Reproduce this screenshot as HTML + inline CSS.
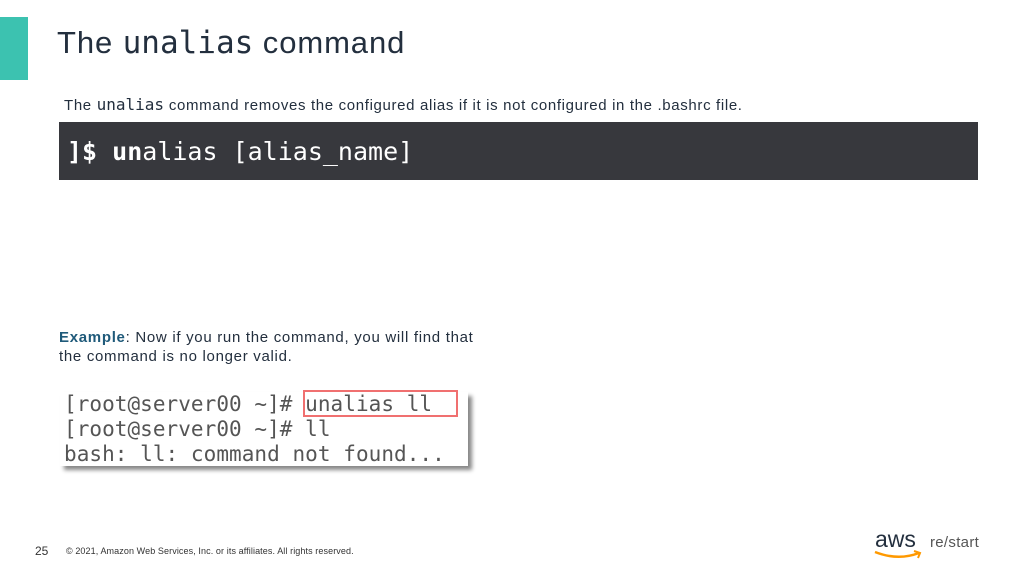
<!DOCTYPE html>
<html><head><style>
body{margin:0;width:1031px;height:578px;background:#fff;position:relative;overflow:hidden;font-family:"Liberation Sans",sans-serif;color:#232f3e}
.a{position:absolute}
.mono{font-family:"DejaVu Sans Mono","Liberation Mono",monospace}
</style></head><body>
<div class="a" style="left:0;top:17px;width:28px;height:63px;background:#3cc2b0"></div>
<div class="a" style="left:57px;top:25px;font-size:31px;letter-spacing:0.9px;color:#232f3e;white-space:nowrap">The <span class="mono" style="font-size:31px;letter-spacing:0">unalias</span> command</div>
<div class="a" style="left:64px;top:95px;font-size:15px;letter-spacing:0.65px;white-space:nowrap">The <span class="mono" style="font-size:16px;letter-spacing:0">unalias</span> command removes the configured alias if it is not configured in the .bashrc file.</div>
<div class="a" style="left:59px;top:122px;width:919px;height:58px;background:#37383d"></div>
<div class="a mono" style="left:67px;top:137px;font-size:25px;color:#fff;white-space:nowrap"><b>]$ un</b>alias [alias_name]</div>
<div class="a" style="left:59px;top:328px;font-size:15px;letter-spacing:0.7px;line-height:19px;color:#232f3e"><b style="color:#1f5a7a">Example</b>: Now if you run the command, you will find that<br>the command is no longer valid.</div>
<div class="a" style="left:60px;top:392px;width:408px;height:74px;background:#fff;box-shadow:4px 4px 4px #888"></div>
<div class="a mono" style="left:64px;top:392px;font-size:21px;letter-spacing:0.05px;line-height:25px;color:#555;white-space:pre">[root@server00 ~]# unalias ll
[root@server00 ~]# ll
bash: ll: command not found...</div>
<div class="a" style="left:303px;top:390px;width:151px;height:23px;border:2px solid #f07070"></div>
<div class="a" style="left:35px;top:544px;font-size:12px;color:#333">25</div>
<div class="a" style="left:66px;top:546px;font-size:9px;letter-spacing:0.1px;color:#333">© 2021, Amazon Web Services, Inc. or its affiliates. All rights reserved.</div>
<div class="a" style="left:875px;top:526px;font-size:23px;color:#232f3e;letter-spacing:0px">aws</div>
<svg class="a" style="left:873px;top:549px" width="52" height="14"><path d="M2 3 Q25 12 46 4" stroke="#f90" stroke-width="2.5" fill="none"/><path d="M41 2 L47 4 L45 9" stroke="#f90" stroke-width="2" fill="none"/></svg>
<div class="a" style="left:930px;top:534px;font-size:15px;letter-spacing:0.3px;color:#555">re/start</div>
</body></html>
